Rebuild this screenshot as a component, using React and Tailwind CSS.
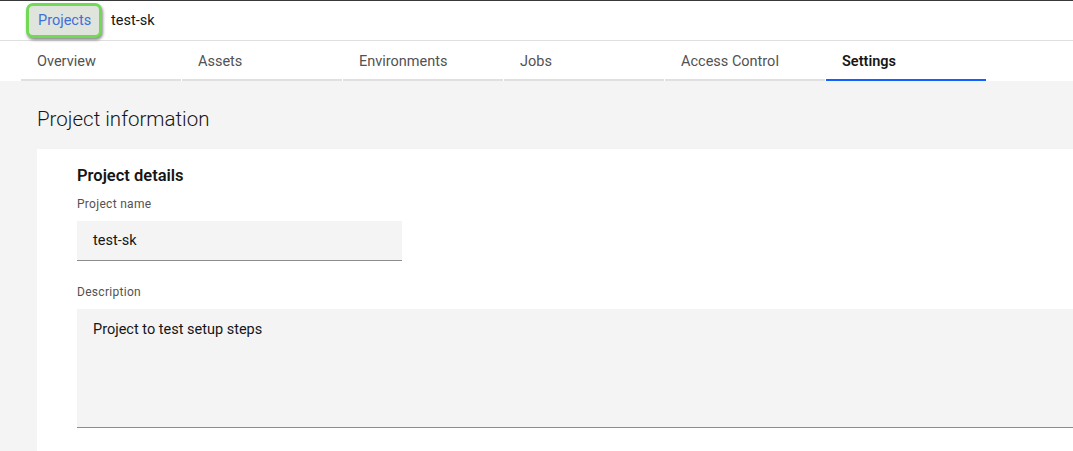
import React from 'react';

const tabs = ['Overview', 'Assets', 'Environments', 'Jobs', 'Access Control', 'Settings'];

const App = () => {
  const active = 'Settings';

  return (
    <div className="w-[1073px] h-[451px] overflow-hidden bg-[#f4f4f4] font-['Roboto',sans-serif] text-[#161616]">
      {/* Breadcrumb bar */}
      <div className="h-[41px] bg-white border-t border-[#393939] border-b border-b-[#e0e0e0] flex items-center pl-[26px]">
        <div className="flex items-center">
          <div className="h-[35px] w-[76px] pl-[9px] flex items-center rounded-[7px] border-[3px] border-[#72d957] bg-[#dfe4dc] shadow-[1px_2px_3px_rgba(0,0,0,0.45)]">
            <span className="text-[14.5px] text-[#3f6fd8]">Projects</span>
          </div>
          <span className="ml-[9px] text-[14.5px] text-[#161616]">test-sk</span>
        </div>
      </div>

      {/* Tabs */}
      <div className="h-[40px] bg-white flex pl-[21px]">
        {tabs.map((t) => (
          <div
            key={t}
            className={`w-[160px] mr-px flex items-center pl-[16px] pt-[3px] border-b-2 ${
              t === active
                ? 'border-[#0f62fe] font-semibold text-[#161616]'
                : 'border-[#e0e0e0] text-[#525252]'
            } text-[14.5px]`}
          >
            {t}
          </div>
        ))}
      </div>

      {/* Content */}
      <div className="pl-[37px]">
        <h1 className="h-[68px] flex items-center pt-[8px] text-[20.5px] font-light text-[#161616]">Project information</h1>
        <div className="bg-white pl-[40px] pt-[16px] pb-[30px] h-[302px]">
          <h2 className="text-[16.5px] font-semibold text-[#161616] leading-[20px] pt-[1px]">Project details</h2>
          <div className="mt-[8px] pt-[1px] text-[12px] text-[#525252] tracking-[0.3px]">Project name</div>
          <div className="mt-[8px] w-[325px] h-[40px] bg-[#f4f4f4] border-b border-[#8d8d8d] flex items-center pl-[16px] text-[14.5px]">
            test-sk
          </div>
          <div className="mt-[22px] text-[12px] text-[#525252] tracking-[0.3px]">Description</div>
          <div className="mt-[8px] h-[119px] bg-[#f4f4f4] border-b border-[#8d8d8d] pl-[16px] pt-[10px] text-[14.5px]">
            Project to test setup steps
          </div>
        </div>
      </div>
    </div>
  );
};

export default App;
